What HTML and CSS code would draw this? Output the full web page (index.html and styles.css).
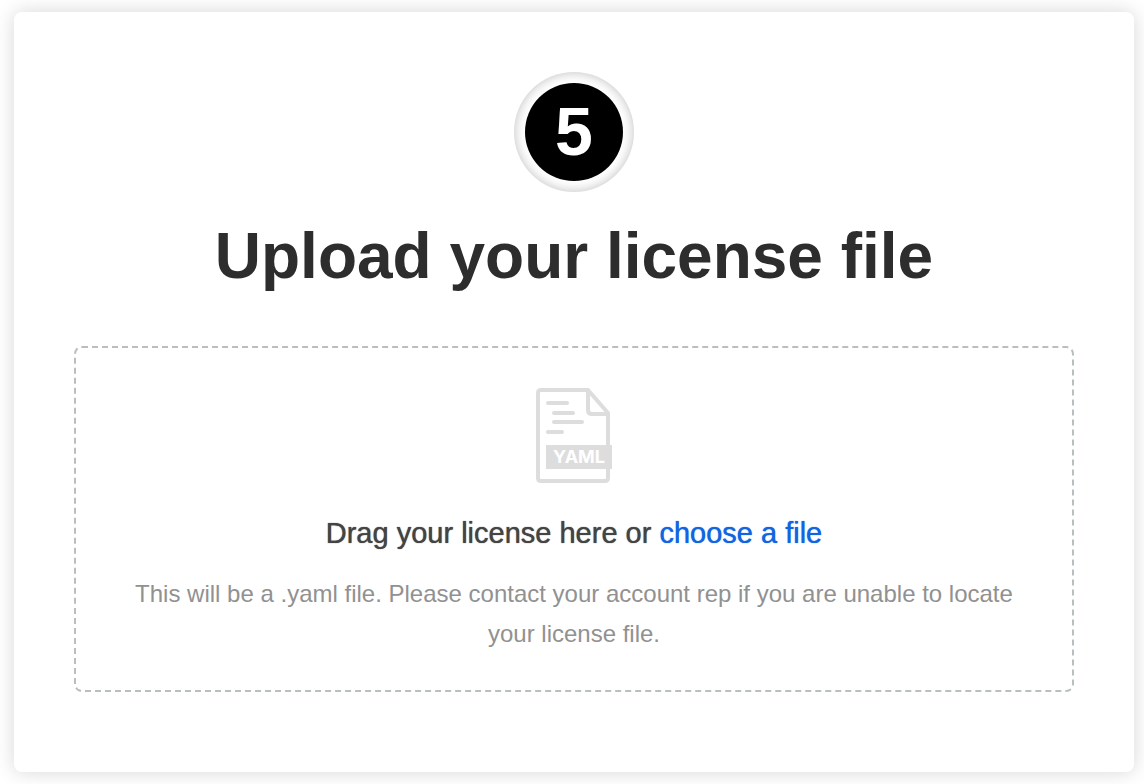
FILE: index.html
```html
<!DOCTYPE html>
<html lang="en">
<head>
<meta charset="utf-8">
<meta name="viewport" content="width=device-width, initial-scale=1">
<title>Upload your license file</title>
<link rel="stylesheet" href="styles.css">
</head>
<body>
<main class="card">
  <div class="step"><span class="step-number">5</span></div>
  <h1 class="title">Upload your license file</h1>
  <section class="dropzone">
    <svg class="file-icon" viewBox="0 0 76 96" width="76" height="96" aria-hidden="true">
      <path d="M53 2H5Q2 2 2 5V90Q2 93 5 93H69Q72 93 72 90V25L52 2V22Q52 26 56 26H72" fill="none" stroke="#ddd" stroke-width="4" stroke-linejoin="round"/>
      <path d="M12 15H31M18 25H37M18 34H46M12 44H26" fill="none" stroke="#ddd" stroke-width="4" stroke-linecap="round"/>
      <rect x="10" y="57" width="66" height="24" fill="#ddd"/>
      <text class="file-type" x="43" y="75" text-anchor="middle">YAML</text>
    </svg>
    <p class="prompt">Drag your license here or <label class="choose" for="license">choose a file</label></p>
    <input class="file-input" id="license" type="file" accept=".yaml">
    <p class="hint">This will be a .yaml file. Please contact your account rep if you are unable to locate your license file.</p>
  </section>
</main>
</body>
</html>
```
FILE: styles.css
```css
* {
  box-sizing: border-box;
}

body {
  margin: 0;
  padding: 12px 10px 12px 14px;
  background: #fff;
  font-family: "Liberation Sans", Helvetica, Arial, sans-serif;
  text-align: center;
}

.card {
  padding: 60px 60px 80px;
  border-radius: 8px;
  background: #fff;
  box-shadow: 0 0 20px rgba(0, 0, 0, 0.16);
}

.step {
  display: flex;
  width: 120px;
  height: 120px;
  margin: 0 auto;
  padding: 11px;
  border-radius: 50%;
  box-shadow: inset 0 0 12px rgba(0, 0, 0, 0.26);
}

.step-number {
  flex: 1;
  border-radius: 50%;
  background: #000;
  color: #fff;
  font-size: 68px;
  font-weight: bold;
  line-height: 96px;
}

.title {
  margin: 24px 0 50px;
  color: #2d2d2d;
  font-size: 64px;
  line-height: 80px;
}

.dropzone {
  position: relative;
  padding: 40px 48px 36px;
  border: 2px dashed #b9bec1;
  border-radius: 8px;
}

.file-icon {
  display: block;
  margin: 0 auto;
}

.file-type {
  fill: #fff;
  font-family: Inter, sans-serif;
  font-size: 18px;
  font-weight: bold;
}

.prompt {
  margin: 28px 0 20px;
  color: #444;
  font-size: 29px;
  font-weight: 500;
  line-height: 42px;
  text-shadow: 0 0 1px currentColor;
}

.choose {
  color: #1264e0;
  cursor: pointer;
}

.file-input {
  position: absolute;
  width: 1px;
  height: 1px;
  opacity: 0;
}

.hint {
  margin: 0;
  color: #919191;
  font-size: 24px;
  line-height: 40px;
}
```
